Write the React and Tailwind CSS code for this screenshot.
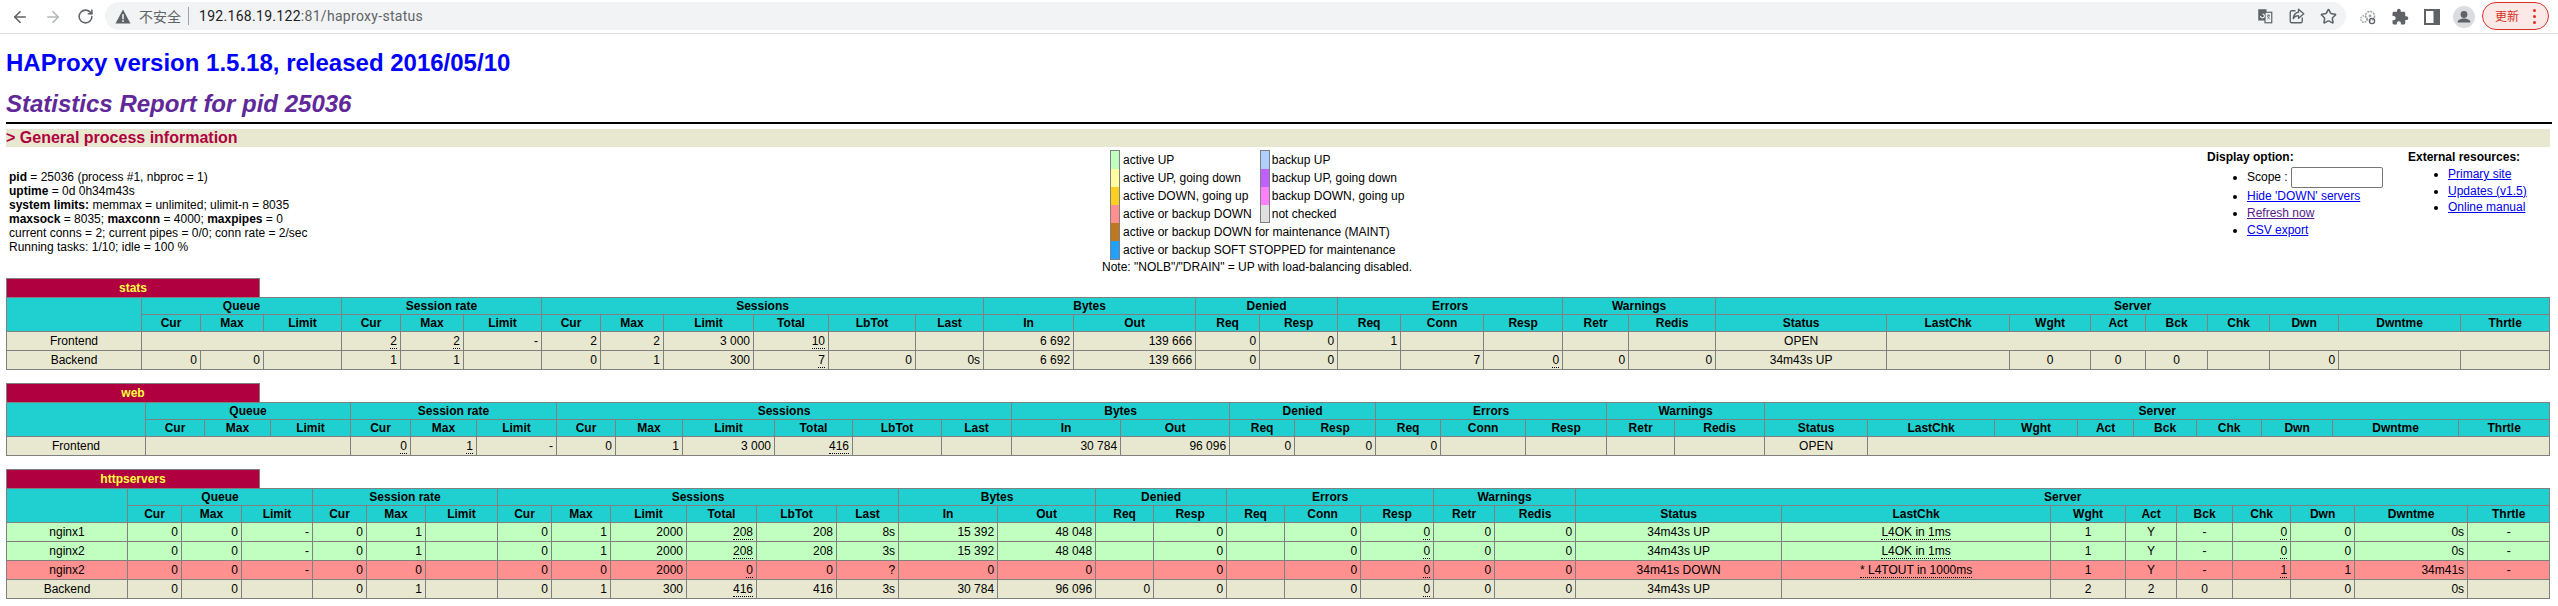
import React from "react";
import { ArrowLeft, ArrowRight, RotateCw, Star } from "lucide-react";

const GROUPS = [
  ["Queue", 3],
  ["Session rate", 3],
  ["Sessions", 6],
  ["Bytes", 2],
  ["Denied", 2],
  ["Errors", 3],
  ["Warnings", 2],
  ["Server", 9],
];

const COLUMNS = [
  "Cur", "Max", "Limit", "Cur", "Max", "Limit", "Cur", "Max", "Limit", "Total", "LbTot", "Last",
  "In", "Out", "Req", "Resp", "Req", "Conn", "Resp", "Retr", "Redis",
  "Status", "LastChk", "Wght", "Act", "Bck", "Chk", "Dwn", "Dwntme", "Thrtle",
];

const U = (v) => ({ v, u: true });
const C = (v, u) => ({ v, c: true, u });
const S = (span) => ({ v: "", span });

const BG = {
  plain: "bg-[#e8e8d0]",
  up: "bg-[#c0ffc0]",
  down: "bg-[#ff9090]",
};

const PROXIES = [
  {
    name: "stats",
    edges: [6, 141, 200, 263, 341, 400, 463, 541, 600, 663, 753, 828, 915, 983, 1073, 1195, 1259, 1337, 1400, 1483, 1562, 1628, 1715, 1886, 2009, 2090, 2145, 2207, 2269, 2338, 2460, 2549],
    rows: [
      { bg: "plain", name: "Frontend", cells: [S(3), U("2"), U("2"), "-", "2", "2", "3 000", U("10"), "", "", "6 692", "139 666", "0", "0", "1", "", "", "", "", C("OPEN"), S(8)] },
      { bg: "plain", name: "Backend", cells: ["0", "0", "", "1", "1", "", "0", "1", "300", U("7"), "0", "0s", "6 692", "139 666", "0", "0", "", "7", U("0"), "0", "0", C("34m43s UP"), "", C("0"), C("0"), C("0"), "", "0", "", ""] },
    ],
  },
  {
    name: "web",
    edges: [6, 145, 204, 270, 350, 410, 476, 556, 615, 682, 774, 852, 941, 1011, 1120, 1229, 1294, 1375, 1440, 1525, 1606, 1674, 1764, 1867, 1994, 2077, 2133, 2196, 2261, 2332, 2458, 2549],
    rows: [
      { bg: "plain", name: "Frontend", cells: [S(3), U("0"), U("1"), "-", "0", "1", "3 000", U("416"), "", "", "30 784", "96 096", "0", "0", "0", "", "", "", "", C("OPEN"), S(8)] },
    ],
  },
  {
    name: "httpservers",
    edges: [6, 127, 181, 241, 312, 366, 425, 497, 551, 610, 686, 756, 836, 898, 997, 1095, 1153, 1226, 1284, 1360, 1433, 1494, 1575, 1781, 2050, 2125, 2176, 2232, 2290, 2354, 2467, 2549],
    rows: [
      { bg: "up", name: "nginx1", cells: ["0", "0", "-", "0", "1", "", "0", "1", "2000", U("208"), "208", "8s", "15 392", "48 048", "", "0", "", "0", U("0"), "0", "0", C("34m43s UP"), C("L4OK in 1ms", true), C("1"), C("Y"), C("-"), U("0"), "0", "0s", C("-")] },
      { bg: "up", name: "nginx2", cells: ["0", "0", "-", "0", "1", "", "0", "1", "2000", U("208"), "208", "3s", "15 392", "48 048", "", "0", "", "0", U("0"), "0", "0", C("34m43s UP"), C("L4OK in 1ms", true), C("1"), C("Y"), C("-"), U("0"), "0", "0s", C("-")] },
      { bg: "down", name: "nginx2", cells: ["0", "0", "-", "0", "0", "", "0", "0", "2000", U("0"), "0", "?", "0", "0", "", "0", "", "0", U("0"), "0", "0", C("34m41s DOWN"), C("* L4TOUT in 1000ms", true), C("1"), C("Y"), C("-"), U("1"), "1", "34m41s", C("-")] },
      { bg: "plain", name: "Backend", cells: ["0", "0", "", "0", "1", "", "0", "1", "300", U("416"), "416", "3s", "30 784", "96 096", "0", "0", "", "0", U("0"), "0", "0", C("34m43s UP"), "", C("2"), C("2"), C("0"), "", "0", "0s", ""] },
    ],
  },
];

const LEGEND = [
  ["bg-[#c0ffc0]", "active UP", "bg-[#b0d0ff]", "backup UP"],
  ["bg-[#ffffa0]", "active UP, going down", "bg-[#c060ff]", "backup UP, going down"],
  ["bg-[#ffd020]", "active DOWN, going up", "bg-[#ff80ff]", "backup DOWN, going up"],
  ["bg-[#ff9090]", "active or backup DOWN", "bg-[#e0e0e0]", "not checked"],
  ["bg-[#c07820]", "active or backup DOWN for maintenance (MAINT)"],
  ["bg-[#20a0ff]", "active or backup SOFT STOPPED for maintenance"],
];

const cellBorder = "border border-[#808080]";

function ToolbarIcon({ children }) {
  return <svg width="18" height="18" viewBox="0 0 24 24" className="shrink-0">{children}</svg>;
}

function Toolbar() {
  return (
    <div className="flex h-[34px] items-center border-b border-[#dadce0] bg-white">
      <ArrowLeft size={18} strokeWidth={2.2} className="ml-[11px] shrink-0 text-[#5f6368]" />
      <ArrowRight size={18} strokeWidth={2.2} className="ml-[15px] shrink-0 text-[#b4b7bb]" />
      <RotateCw size={17} strokeWidth={2.2} className="ml-[15px] shrink-0 text-[#5f6368]" />
      <div className="ml-[11px] mb-[1px] flex h-[28px] w-[2241px] shrink-0 items-center rounded-full bg-[#f1f3f4]">
        <svg width="16" height="15" viewBox="0 0 16 15" className="ml-[10px] shrink-0">
          <path d="M8 0.5 L15.5 14.5 H0.5 Z" fill="#5f6368" />
          <rect x="7.2" y="5.2" width="1.6" height="5" fill="#f1f3f4" />
          <rect x="7.2" y="11.2" width="1.6" height="1.6" fill="#f1f3f4" />
        </svg>
        <span className="ml-[8px] font-['Noto_Sans_CJK_SC',sans-serif] text-[14px] leading-none text-[#5f6368]">不安全</span>
        <span className="ml-[7px] h-[18px] w-px bg-[#9aa0a6]"></span>
        <span className="ml-[10px] font-['Roboto',sans-serif] text-[14px] leading-none tracking-[0.3px] text-[#202124]">
          192.168.19.122<span className="text-[#5f6368]">:81/haproxy-status</span>
        </span>
        <div className="ml-auto mr-[9px] flex items-center gap-[14px] text-[#5f6368]">
          <ToolbarIcon>
            <rect x="3" y="3" width="11" height="15" fill="#5f6368" />
            <rect x="12" y="7" width="9" height="14" fill="#f1f3f4" stroke="#5f6368" strokeWidth="1.6" />
            <path d="M6 12 a2.6 2.6 0 1 0 2.6 -2.6" fill="none" stroke="#fff" strokeWidth="1.4" />
            <path d="M14.5 11 h4 M16.5 10 v1.5 M15 16 q2.5 -1 3 -5 M15 12 q1.5 3 3.5 4" fill="none" stroke="#5f6368" strokeWidth="1" />
          </ToolbarIcon>
          <ToolbarIcon>
            <path d="M10 5 H5 a2 2 0 0 0 -2 2 v12 a2 2 0 0 0 2 2 h12 a2 2 0 0 0 2 -2 v-5" fill="none" stroke="#5f6368" strokeWidth="1.8" />
            <path d="M14 3 l7 6 -7 6 v-3.5 c-3.5 0 -5.5 1 -7 4 c0.5 -5 3 -8 7 -8.5 Z" fill="none" stroke="#5f6368" strokeWidth="1.8" strokeLinejoin="round" />
          </ToolbarIcon>
          <Star size={17} strokeWidth={2.2} className="shrink-0 text-[#5f6368]" />
        </div>
      </div>
      <ToolbarGears />
      <svg width="18" height="18" viewBox="0 0 24 24" className="ml-[14px] shrink-0">
        <path fill="#5f6368" d="M20.5 11H19V7c0-1.1-.9-2-2-2h-4V3.5C13 2.12 11.88 1 10.5 1S8 2.12 8 3.5V5H4c-1.1 0-1.99.9-1.99 2v3.8H3.5c1.49 0 2.7 1.21 2.7 2.7s-1.21 2.7-2.7 2.7H2V20c0 1.1.9 2 2 2h3.8v-1.5c0-1.49 1.21-2.7 2.7-2.7 1.49 0 2.7 1.21 2.7 2.7V22H17c1.1 0 2-.9 2-2v-4h1.5c1.38 0 2.5-1.12 2.5-2.5S21.88 11 20.5 11z" />
      </svg>
      <svg width="16" height="16" viewBox="0 0 16 16" className="ml-[15px] shrink-0">
        <rect x="1" y="1" width="14" height="14" fill="none" stroke="#5f6368" strokeWidth="2" />
        <rect x="9.5" y="1" width="5.5" height="14" fill="#5f6368" />
      </svg>
      <svg width="22" height="22" viewBox="0 0 22 22" className="ml-[13px] shrink-0">
        <circle cx="11" cy="11" r="11" fill="#dadce0" />
        <circle cx="11" cy="8.5" r="3.4" fill="#5f6368" />
        <path d="M4.5 16.5 c0 -3 4 -4 6.5 -4 s6.5 1 6.5 4 Z" fill="#5f6368" />
      </svg>
      <div className="ml-[7px] mb-[1px] flex h-[28px] w-[67px] shrink-0 items-center rounded-full border border-[#d93025] bg-[#fce8e6] pl-[12px]">
        <span className="font-['Noto_Sans_CJK_SC',sans-serif] text-[12px] leading-none text-[#d93025]">更新</span>
        <span className="ml-[14px] flex flex-col gap-[3px]">
          <span className="size-[3px] rounded-full bg-[#d93025]"></span>
          <span className="size-[3px] rounded-full bg-[#d93025]"></span>
          <span className="size-[3px] rounded-full bg-[#d93025]"></span>
        </span>
      </div>
    </div>
  );
}

function ToolbarGears() {
  return (
    <svg width="18" height="18" viewBox="0 0 18 18" className="ml-[13px] shrink-0">
      <circle cx="11" cy="8" r="4.5" fill="none" stroke="#9aa0a6" strokeWidth="1.6" strokeDasharray="2 1" />
      <circle cx="5" cy="11" r="3.2" fill="none" stroke="#9aa0a6" strokeWidth="1.4" strokeDasharray="1.6 1" />
      <circle cx="13" cy="13" r="2.6" fill="none" stroke="#5f6368" strokeWidth="1.3" />
      <circle cx="11" cy="8" r="1.4" fill="#9aa0a6" />
    </svg>
  );
}

function ProcessInfo() {
  return (
    <div className="w-[1096px] shrink-0 pl-[3px] pt-[23px] leading-[14px]">
      <div><b>pid</b> = 25036 (process #1, nbproc = 1)</div>
      <div><b>uptime</b> = 0d 0h34m43s</div>
      <div><b>system limits:</b> memmax = unlimited; ulimit-n = 8035</div>
      <div><b>maxsock</b> = 8035; <b>maxconn</b> = 4000; <b>maxpipes</b> = 0</div>
      <div>current conns = 2; current pipes = 0/0; conn rate = 2/sec</div>
      <div>Running tasks: 1/10; idle = 100 %</div>
    </div>
  );
}

function Legend() {
  return (
    <div className="w-[1105px] shrink-0 pt-[3px]">
      <table className="ml-[8px] border-collapse">
        <tbody>
          {LEGEND.map((row, i) => (
            <tr key={i} className="h-[18px]">
              <td className={`w-[9px] border-x border-[#808080] p-0 ${row[0]} ${i === 0 ? "border-t" : ""} ${i === 5 ? "border-b" : ""}`}></td>
              <td colSpan={row[2] ? 1 : 3} className="w-[140px] whitespace-nowrap p-0 pl-[3px] pr-[8px]">{row[1]}</td>
              {row[2] && (
                <>
                  <td className={`w-[9px] border-x border-[#808080] p-0 ${row[2]} ${i === 0 ? "border-t" : ""} ${i === 3 ? "border-b" : ""}`}></td>
                  <td className="whitespace-nowrap p-0 pl-[2px]">{row[3]}</td>
                </>
              )}
            </tr>
          ))}
        </tbody>
      </table>
      <div className="leading-[14px]">Note: "NOLB"/"DRAIN" = UP with load-balancing disabled.</div>
    </div>
  );
}

function DisplayOptions() {
  const link = "text-[#0000ee] underline";
  return (
    <div className="w-[201px] shrink-0 pt-[3px]">
      <div className="font-bold leading-[14px]">Display option:</div>
      <ul className="mt-[3px] list-disc pl-[40px] leading-[17px]">
        <li className="h-[21px] leading-[21px]">
          Scope :<input className="ml-[3px] h-[21px] w-[92px] rounded-[2px] border border-[#767676] bg-white align-top" />
        </li>
        <li><a className={link}>Hide 'DOWN' servers</a></li>
        <li><a className="text-[#551a8b] underline">Refresh now</a></li>
        <li><a className={link}>CSV export</a></li>
      </ul>
    </div>
  );
}

function ExternalResources() {
  const link = "text-[#0000ee] underline";
  return (
    <div className="shrink-0 pt-[3px]">
      <div className="font-bold leading-[14px]">External resources:</div>
      <ul className="mt-[2px] list-disc pl-[40px] leading-[16.5px]">
        <li><a className={link}>Primary site</a></li>
        <li><a className={link}>Updates (v1.5)</a></li>
        <li><a className={link}>Online manual</a></li>
      </ul>
    </div>
  );
}

function Cell({ cell, bg }) {
  const c = typeof cell === "string" ? { v: cell } : cell;
  return (
    <td colSpan={c.span} className={`${cellBorder} ${bg} px-[3px] py-0 whitespace-nowrap ${c.c ? "text-center" : "text-right"}`}>
      {c.u ? <span className="border-b border-dotted border-black">{c.v}</span> : c.v}
    </td>
  );
}

function ProxyTable({ proxy }) {
  const widths = proxy.edges.slice(1).map((e, i) => e - proxy.edges[i]);
  return (
    <div className="mb-[13px]">
      <div className="h-[19px] w-[254px] border-x border-t border-[#808080] bg-[#b00040] text-center font-bold leading-[18px] text-[#ffff40]">{proxy.name}</div>
      <table className="w-[2543px] table-fixed border-collapse leading-[14px]">
        <colgroup>
          {widths.map((w, i) => <col key={i} width={w} />)}
        </colgroup>
        <thead className="bg-[#20d0d0] font-bold">
          <tr className="h-[17px]">
            <th rowSpan={2} className={cellBorder}></th>
            {GROUPS.map(([label, span]) => (
              <th key={label} colSpan={span} className={`${cellBorder} p-0 font-bold`}>{label}</th>
            ))}
          </tr>
          <tr className="h-[17px]">
            {COLUMNS.map((label, i) => (
              <th key={i} className={`${cellBorder} p-0 font-bold`}>{label}</th>
            ))}
          </tr>
        </thead>
        <tbody>
          {proxy.rows.map((row, i) => (
            <tr key={i} className="h-[19px]">
              <td className={`${cellBorder} ${BG[row.bg]} p-0 text-center`}>{row.name}</td>
              {row.cells.map((cell, j) => <Cell key={j} cell={cell} bg={BG[row.bg]} />)}
            </tr>
          ))}
        </tbody>
      </table>
    </div>
  );
}

export default function App() {
  return (
    <div className="h-[606px] w-[2558px] overflow-hidden bg-white font-['Liberation_Sans',Arial,sans-serif] text-[12px] text-black">
      <Toolbar />
      <div className="pl-[6px] pr-[6px]">
        <h1 className="mt-[15px] text-[24px] font-bold leading-[28px] text-[#0000ff]">HAProxy version 1.5.18, released 2016/05/10</h1>
        <h2 className="mt-[13px] text-[24px] font-bold italic leading-[28px] text-[#602898]">Statistics Report for pid 25036</h2>
        <div className="mt-[4px] h-[2px] bg-black"></div>
        <h3 className="mt-[5px] mr-[2px] h-[18px] bg-[#e8e8d0] text-[16px] font-bold leading-[18px] text-[#b00040]">&gt; General process information</h3>
        <div className="flex h-[131px] items-start">
          <ProcessInfo />
          <Legend />
          <DisplayOptions />
          <ExternalResources />
        </div>
        {PROXIES.map((p) => <ProxyTable key={p.name} proxy={p} />)}
      </div>
    </div>
  );
}
